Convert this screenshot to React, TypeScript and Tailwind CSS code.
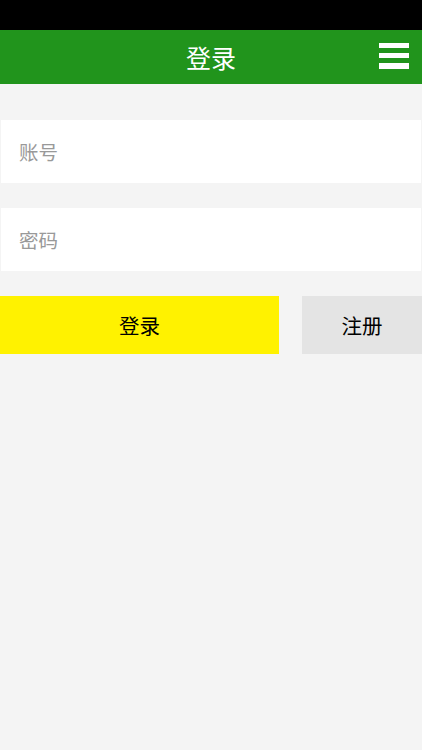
export default function App() {
  return (
    <div className="flex min-h-[750px] w-full flex-col bg-[#f4f4f4] font-['Noto_Sans_CJK_SC',sans-serif]">
      <div className="h-[30px] bg-black" />
      <header className="relative flex h-[54px] items-center justify-center bg-[#21941c]">
        <h1 className="text-[25px] leading-none text-white">登录</h1>
        <button className="absolute right-[13px] top-[13px] flex w-[30px] flex-col gap-[5px]" aria-label="menu">
          <span className="h-[5px] w-full bg-white" />
          <span className="h-[5px] w-full bg-white" />
          <span className="h-[6px] w-full bg-white" />
        </button>
      </header>

      <div className="mt-[36px] flex flex-col gap-[25px] px-px">
        <input
          className="h-[63px] w-full bg-white px-[18px] text-[19.5px] text-[#333] outline-none placeholder:text-[#999999]"
          placeholder="账号"
        />
        <input
          type="password"
          className="h-[63px] w-full bg-white px-[18px] text-[19.5px] text-[#333] outline-none placeholder:text-[#999999]"
          placeholder="密码"
        />
      </div>

      <div className="mt-[25px] flex h-[58px] justify-between">
        <button className="w-[279px] bg-[#fff200] text-[20.5px] text-black">登录</button>
        <button className="w-[120px] bg-[#e4e4e4] text-[20.5px] text-black">注册</button>
      </div>
    </div>
  );
}
